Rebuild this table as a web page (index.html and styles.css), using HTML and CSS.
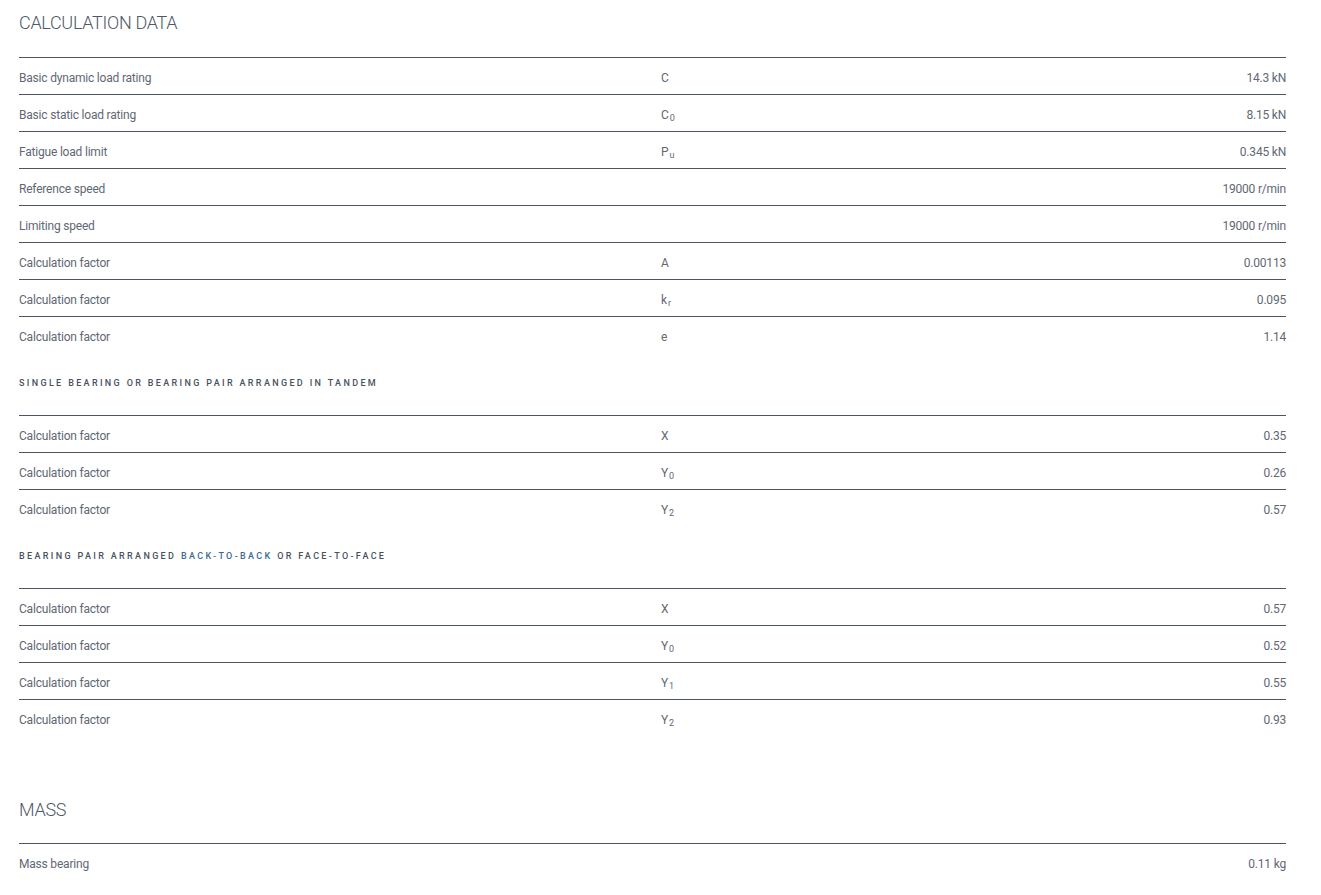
FILE: index.html
```html
<!DOCTYPE html>
<html lang="en">
<head>
    <meta charset="UTF-8">
    <meta name="viewport" content="width=device-width, initial-scale=1.0">
    <title>Calculation Data</title>
    <link rel="stylesheet" href="styles.css">
</head>
<body>

<div class="container">
    <!-- Calculation data -->
    <h2 class="title">Calculation data</h2>
    <div class="table">
        <div class="row"><span>Basic dynamic load rating</span><span>C</span><span>14.3 kN</span></div>
        <div class="row"><span>Basic static load rating</span><span>C<sub>0</sub></span><span>8.15 kN</span></div>
        <div class="row"><span>Fatigue load limit</span><span>P<sub>u</sub></span><span>0.345 kN</span></div>
        <div class="row"><span>Reference speed</span><span></span><span>19000 r/min</span></div>
        <div class="row"><span>Limiting speed</span><span></span><span>19000 r/min</span></div>
        <div class="row"><span>Calculation factor</span><span>A</span><span>0.00113</span></div>
        <div class="row"><span>Calculation factor</span><span>k<sub>r</sub></span><span>0.095</span></div>
        <div class="row"><span>Calculation factor</span><span>e</span><span>1.14</span></div>
    </div>

    <h4 class="subtitle">Single bearing or bearing pair arranged in tandem</h4>
    <div class="table">
        <div class="row"><span>Calculation factor</span><span>X</span><span>0.35</span></div>
        <div class="row"><span>Calculation factor</span><span>Y<sub>0</sub></span><span>0.26</span></div>
        <div class="row"><span>Calculation factor</span><span>Y<sub>2</sub></span><span>0.57</span></div>
    </div>

    <h4 class="subtitle">Bearing pair arranged <a href="#">back-to-back</a> or face-to-face</h4>
    <div class="table">
        <div class="row"><span>Calculation factor</span><span>X</span><span>0.57</span></div>
        <div class="row"><span>Calculation factor</span><span>Y<sub>0</sub></span><span>0.52</span></div>
        <div class="row"><span>Calculation factor</span><span>Y<sub>1</sub></span><span>0.55</span></div>
        <div class="row"><span>Calculation factor</span><span>Y<sub>2</sub></span><span>0.93</span></div>
    </div>

    <!-- Mass -->
    <h2 class="title mass">Mass</h2>
    <div class="table">
        <div class="row"><span>Mass bearing</span><span></span><span>0.11 kg</span></div>
    </div>
</div>

</body>
</html>
```

FILE: styles.css
```css
body {
    margin: 0;
    font-family: Roboto, "Liberation Sans", sans-serif;
    background-color: #fff;
    color: #5f6874;
}
.container {
    padding: 0 35px 0 19px;
}
.title {
    margin: 0;
    padding: 11px 0 22px;
    font-size: 18px;
    line-height: 24px;
    font-weight: 300;
    text-transform: uppercase;
    color: #4e5966;
    letter-spacing: -0.3px;
}
.title.mass {
    padding-top: 62px;
    padding-bottom: 21px;
}
.subtitle {
    margin: 0;
    padding: 23px 0 25px;
    font-size: 9px;
    line-height: 14px;
    font-weight: 500;
    letter-spacing: 2.35px;
    text-transform: uppercase;
    color: #48525e;
}
.subtitle a {
    color: #3d6a90;
    text-decoration: none;
}
.row {
    display: grid;
    grid-template-columns: 642px 1fr auto;
    border-top: 1px solid #4a5561;
    padding: 13px 0 9px;
    font-size: 12px;
    line-height: 14px;
    letter-spacing: -0.2px;
}
.row span:last-child {
    text-align: right;
}
sub {
    font-size: 9px;
    vertical-align: -2px;
    line-height: 0;
    margin-left: 1px;
}
```
